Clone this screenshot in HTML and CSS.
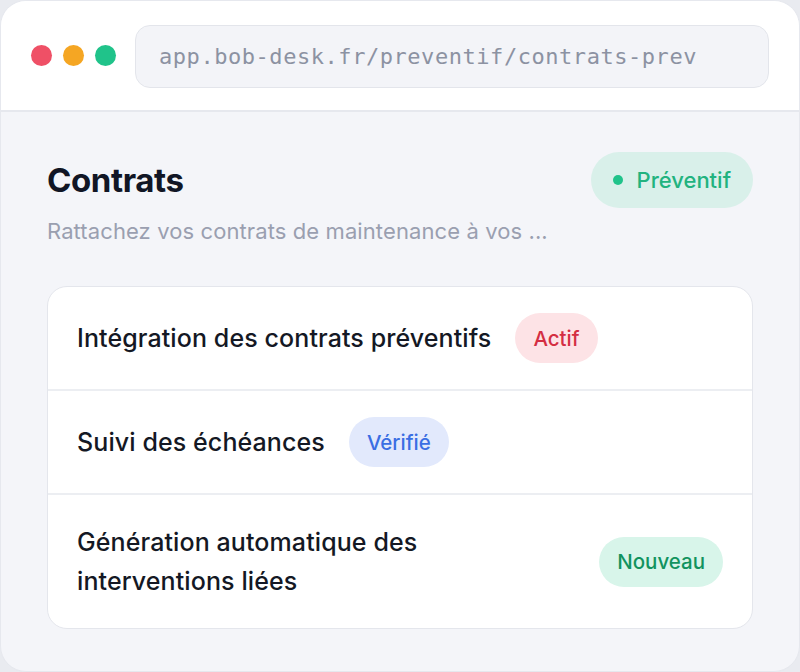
FILE: index.html
```html
<!DOCTYPE html>
<html lang="fr">
<head>
<meta charset="utf-8">
<title>Contrats</title>
<link rel="stylesheet" href="styles.css">
</head>
<body>
<div class="window">
  <header class="topbar">
    <div class="dots">
      <span class="dot dot-red"></span>
      <span class="dot dot-orange"></span>
      <span class="dot dot-green"></span>
    </div>
    <div class="url">app.bob-desk.fr/preventif/contrats-prev</div>
  </header>
  <main class="content">
    <div class="head">
      <h1 class="title">Contrats</h1>
      <span class="pill pill-prev"><span class="pill-dot"></span>Préventif</span>
    </div>
    <p class="subtitle">Rattachez vos contrats de maintenance à vos ...</p>
    <div class="card">
      <div class="row">
        <span class="row-text">Intégration des contrats préventifs</span>
        <span class="badge badge-red">Actif</span>
      </div>
      <div class="row">
        <span class="row-text">Suivi des échéances</span>
        <span class="badge badge-blue">Vérifié</span>
      </div>
      <div class="row row-wide">
        <span class="row-text row-text-wrap">Génération automatique des interventions liées</span>
        <span class="badge badge-green">Nouveau</span>
      </div>
    </div>
  </main>
</div>
</body>
</html>
```

FILE: styles.css
```css
* { box-sizing: border-box; }
html, body { margin: 0; padding: 0; }
body {
  background: #e9ebf0;
  font-family: Inter, "Noto Sans", sans-serif;
  width: 800px;
  height: 672px;
  overflow: hidden;
}
.window {
  width: 800px;
  height: 672px;
  border-radius: 26px;
  overflow: hidden;
  background: #f4f5f9;
  border: 1px solid #e6e8ee;
  display: flex;
  flex-direction: column;
}
.topbar {
  height: 111px;
  flex: none;
  background: #ffffff;
  border-bottom: 2px solid #e6e8ee;
  display: flex;
  align-items: center;
  padding: 0 30px 0 30px;
  gap: 19px;
}
.dots { display: flex; gap: 11px; }
.dot { width: 21px; height: 21px; border-radius: 50%; display: block; }
.dot-red { background: #ef5066; }
.dot-orange { background: #f5a623; }
.dot-green { background: #20c38a; }
.url {
  flex: 1;
  height: 63px;
  margin-top: 1px;
  background: #f3f4f8;
  border: 1.5px solid #e3e5eb;
  border-radius: 15px;
  display: flex;
  align-items: center;
  padding-left: 23px;
  font-family: "DejaVu Sans Mono", "Liberation Mono", monospace;
  font-size: 22px;
  letter-spacing: 0.55px;
  color: #8c92a2;
}
.content { padding: 40px 46px 0 46px; }
.head {
  display: flex;
  align-items: center;
  justify-content: space-between;
}
.title {
  margin: 0;
  font-size: 33px;
  font-weight: 700;
  letter-spacing: -0.4px;
  color: #111625;
}
.pill {
  display: inline-flex;
  align-items: center;
  gap: 14px;
  height: 56px;
  padding: 0 22px 0 22px;
  border-radius: 28px;
  font-size: 22px;
  font-weight: 500;
  letter-spacing: 0;
}
.pill-prev { background: #d9f0ea; color: #22b37f; }
.pill-dot { width: 10px; height: 10px; border-radius: 50%; background: #20c38a; }
.subtitle {
  margin: 10px 0 0 0;
  font-size: 22px;
  color: #9a9fb0;
  letter-spacing: 0.1px;
}
.card {
  margin-top: 42px;
  background: #ffffff;
  border: 1.5px solid #e4e6ec;
  border-radius: 20px;
  overflow: hidden;
}
.row {
  display: flex;
  align-items: center;
  gap: 24px;
  min-height: 104px;
  padding: 0 29px;
  border-bottom: 2px solid #eceef2;
}
.row:last-child { border-bottom: none; min-height: 133px; }
.row-wide { justify-content: space-between; }
.row-text {
  font-size: 25px;
  font-weight: 500;
  color: #141824;
  letter-spacing: 0.1px;
}
.row-text-wrap { max-width: 400px; line-height: 39px; }
.badge {
  display: inline-flex;
  align-items: center;
  height: 50px;
  padding: 0 18px;
  border-radius: 25px;
  font-size: 20.5px;
  font-weight: 500;
  letter-spacing: 0;
}
.badge-red { background: #fde3e6; color: #d42e42; }
.badge-blue { background: #e2e9fc; color: #3a6ee3; }
.badge-green { background: #d8f5ea; color: #12935f; }
```
